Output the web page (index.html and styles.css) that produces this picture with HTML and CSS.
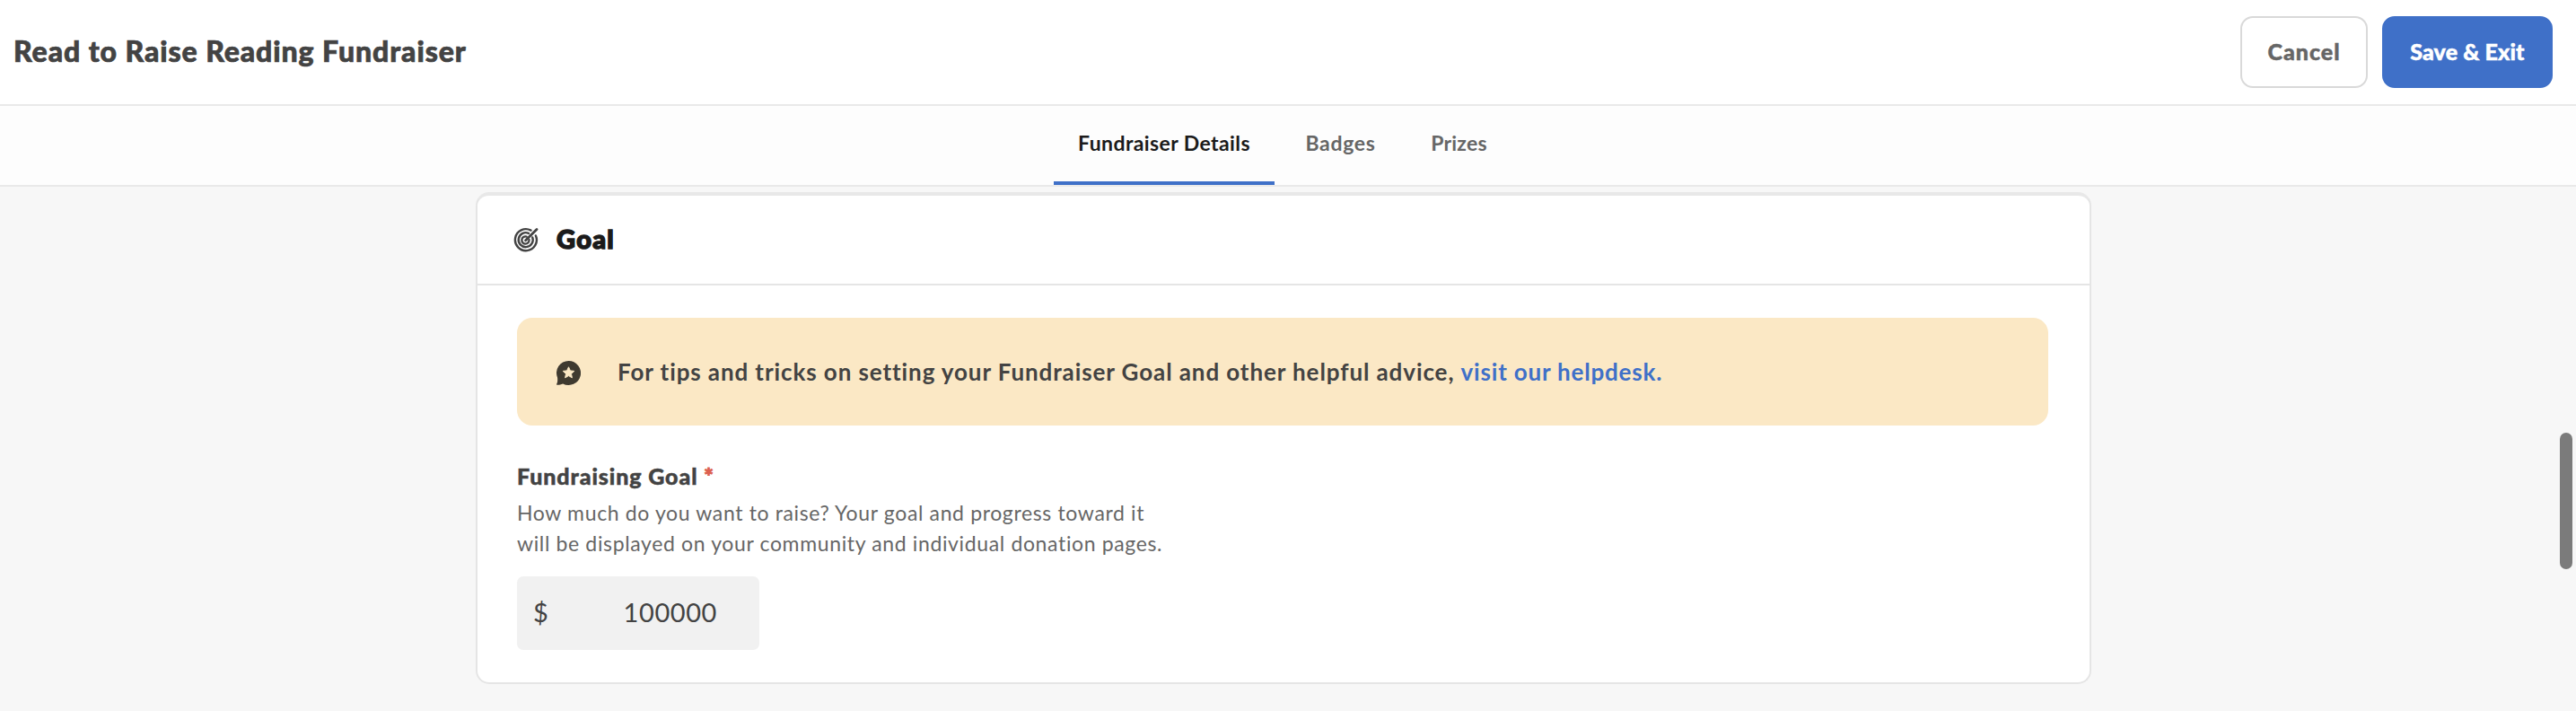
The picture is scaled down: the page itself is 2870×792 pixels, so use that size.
FILE: index.html
```html
<!DOCTYPE html>
<html lang="en">
<head>
<meta charset="utf-8">
<title>Read to Raise Reading Fundraiser</title>
<link rel="stylesheet" href="styles.css">
</head>
<body>
<header class="topbar">
  <h1 class="title">Read to Raise Reading Fundraiser</h1>
  <div class="actions">
    <button class="btn btn-cancel">Cancel</button>
    <button class="btn btn-save">Save &amp; Exit</button>
  </div>
</header>
<nav class="tabs">
  <a class="tab tab-details active">Fundraiser Details</a>
  <a class="tab tab-badges">Badges</a>
  <a class="tab tab-prizes">Prizes</a>
</nav>
<main class="content">
  <section class="card">
    <div class="card-head">
      <svg class="icon-target" viewBox="0 0 28 28" fill="none" stroke="#434343" stroke-width="2.4" stroke-linecap="round">
        <path d="M19.5 3.6A12 12 0 1 0 24.9 9.4"/>
        <path d="M17 6.9A8 8 0 1 0 21.2 11.4"/>
        <path d="M14.6 10.6A4.1 4.1 0 1 0 17.5 14"/>
        <path d="M13.6 14.8L26 2.6" stroke-width="2.8"/>
      </svg>
      <h2 class="card-title">Goal</h2>
    </div>
    <div class="card-body">
      <div class="tip">
        <svg class="icon-chat" viewBox="0 0 27 27">
          <path fill="#3f3a30" d="M13.5 0A13.5 13.5 0 1 1 7.2 25.4C5 26.3 2.8 26.9.8 26.8 0 26.7 0 26.1.3 25.5 1.2 23.7 1.3 22 1.1 18.8A13.5 13.5 0 0 1 13.5 0Z"/>
          <path fill="#fbe8c5" stroke="#fbe8c5" stroke-linejoin="round" d="M13.5 6.8L15.4 10.9 19.8 11.4 16.5 14.4 17.4 18.8 13.5 16.6 9.6 18.8 10.5 14.4 7.2 11.4 11.6 10.9Z"/>
        </svg>
        <p class="tip-text">For tips and tricks on setting your Fundraiser Goal and other helpful advice, <a class="tip-link">visit our helpdesk.</a></p>
      </div>
      <label class="label">Fundraising Goal <span class="required">*</span></label>
      <p class="hint">How much do you want to raise? Your goal and progress toward it<br>will be displayed on your community and individual donation pages.</p>
      <div class="amount"><span>$</span><span class="amount-value">100000</span></div>
    </div>
  </section>
</main>
<div class="scroll-thumb"></div>
</body>
</html>
```

FILE: styles.css
```css
* { box-sizing: border-box; margin: 0; }
body {
  height: 792px;
  overflow: hidden;
  background: #f7f7f7;
  color: #434343;
  font-family: Lato, "Open Sans", sans-serif;
}
.topbar {
  display: flex;
  justify-content: space-between;
  align-items: center;
  height: 118px;
  padding: 0 26px 0 15px;
  background: #fff;
  border-bottom: 2px solid #e9e9e9;
}
.title { padding-bottom: 4px; font-size: 32px; font-weight: 900; letter-spacing: .92px; -webkit-text-stroke: .7px #434343; }
.actions { display: flex; gap: 16px; }
.btn {
  height: 80px;
  padding: 0 0 3px;
  border: 2px solid #d9d9d9;
  border-radius: 14px;
  background: #fff;
  font: 900 25px Lato, sans-serif;
  -webkit-text-stroke: .5px currentColor;
}
.btn-cancel { width: 142px; color: #666; letter-spacing: 1px; }
.btn-save { width: 190px; color: #fff; background: #3f70c8; border-color: #3f70c8; letter-spacing: .12px; }
.tabs {
  display: flex;
  justify-content: center;
  gap: 5px;
  height: 90px;
  padding-right: 12px;
  background: #fdfdfd;
  border-bottom: 2px solid #e9e9e9;
}
.tab {
  display: flex;
  align-items: center;
  justify-content: center;
  padding-bottom: 2px;
  border-bottom: 4px solid transparent;
  font-size: 23px;
  font-weight: 700;
  color: #666;
}
.tab-details { width: 246px; letter-spacing: .4px; }
.tab-badges { width: 137px; letter-spacing: .7px; }
.tab-prizes { width: 117px; letter-spacing: .25px; }
.tab.active { color: #1b1b1b; border-bottom-color: #3f70c8; }
.content { display: flex; justify-content: center; padding: 6px 10px 0 0; }
.card {
  width: 1800px;
  background: #fff;
  border: 2px solid #e5e5e5;
  border-top: 4px solid #e8e8e8;
  border-radius: 15px;
}
.card-head {
  display: flex;
  align-items: center;
  gap: 20px;
  height: 100px;
  padding-left: 40px;
  border-bottom: 2px solid #e5e5e5;
}
.icon-target { width: 28px; height: 28px; }
.card-title { padding-bottom: 4px; font-size: 29px; font-weight: 900; color: #1b1b1b; letter-spacing: 1.3px; -webkit-text-stroke: 1.5px #1b1b1b; }
.card-body { padding: 36px 46px 36px 44px; }
.tip {
  display: flex;
  align-items: center;
  gap: 41px;
  height: 120px;
  padding-left: 44px;
  border-radius: 17px;
  background: #fbe8c5;
}
.icon-chat { width: 27px; height: 27px; margin-top: 2px; }
.tip-text { font-size: 26px; font-weight: 700; letter-spacing: .9px; white-space: nowrap; }
.tip-link { color: #3f70c8; letter-spacing: .8px; }
.label { display: block; margin-top: 41px; font-size: 25px; line-height: 30px; font-weight: 900; letter-spacing: .9px; -webkit-text-stroke: .5px currentColor; }
.required { color: #dc604f; -webkit-text-stroke: 1px #dc604f; }
.hint { margin-top: 9px; font-size: 23px; line-height: 34px; color: #666; letter-spacing: .64px; }
.amount {
  display: flex;
  align-items: center;
  justify-content: space-between;
  width: 270px;
  height: 82px;
  margin-top: 20px;
  padding: 0 47px 4px 18px;
  border-radius: 7px;
  background: #f1f1f1;
  font-size: 29px;
}
.amount-value { letter-spacing: .58px; }
.scroll-thumb {
  position: absolute;
  top: 482px;
  right: 4px;
  width: 14px;
  height: 152px;
  border-radius: 7px;
  background: #7b7b7b;
}
```
